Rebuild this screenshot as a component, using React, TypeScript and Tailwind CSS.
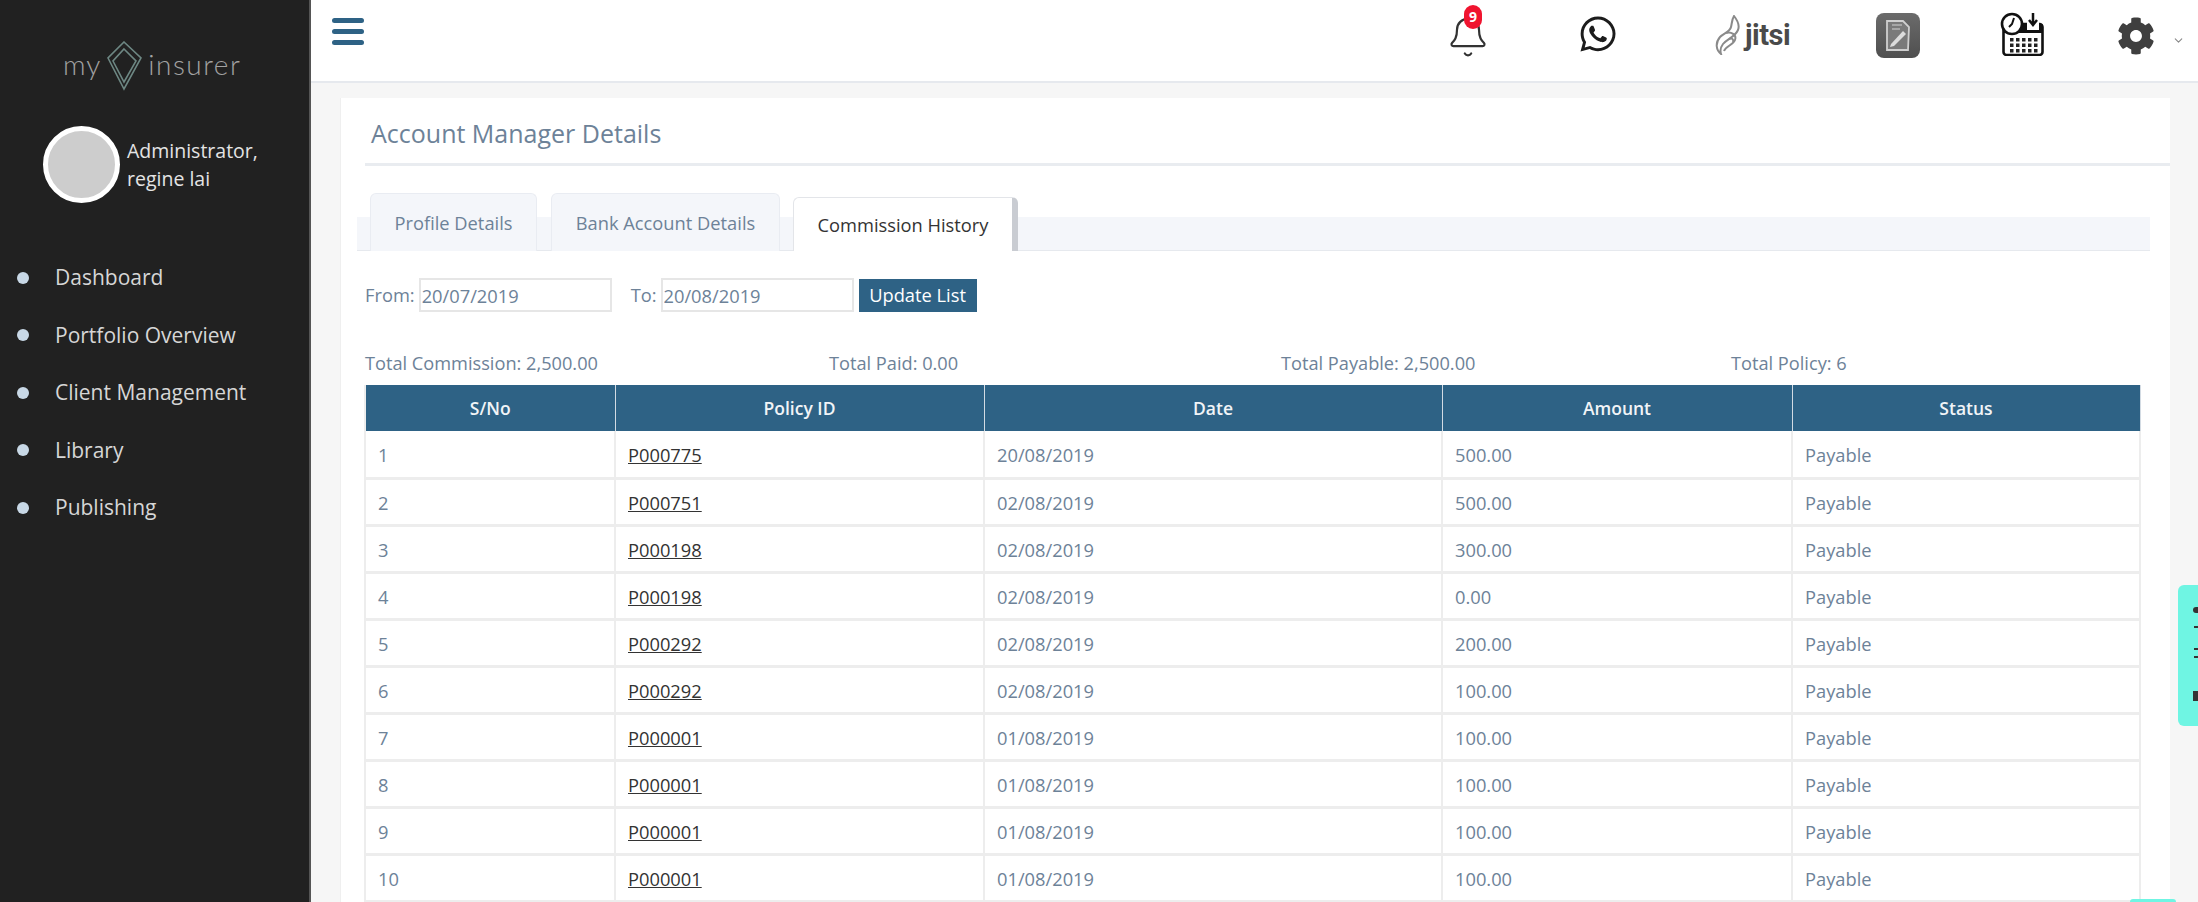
import { Bell, ChevronDown } from "lucide-react";
import { FaCog, FaWhatsapp } from "react-icons/fa";

const menu = ["Dashboard", "Portfolio Overview", "Client Management", "Library", "Publishing"];

const rows = [
  ["1", "P000775", "20/08/2019", "500.00"],
  ["2", "P000751", "02/08/2019", "500.00"],
  ["3", "P000198", "02/08/2019", "300.00"],
  ["4", "P000198", "02/08/2019", "0.00"],
  ["5", "P000292", "02/08/2019", "200.00"],
  ["6", "P000292", "02/08/2019", "100.00"],
  ["7", "P000001", "01/08/2019", "100.00"],
  ["8", "P000001", "01/08/2019", "100.00"],
  ["9", "P000001", "01/08/2019", "100.00"],
  ["10", "P000001", "01/08/2019", "100.00"],
];

function Gem() {
  return (
    <svg className="w-[36px] h-[50px] ml-[6px] mr-[5px] shrink-0" viewBox="0 0 36 50" fill="none" stroke="#6d8783" strokeWidth={1.6}>
      <path d="M17 1 L34 17 L17 48 L1 17 Z" />
      <path d="M17 8 L29 20 L17 41 L6 20 Z" />
    </svg>
  );
}

function NotesIcon() {
  return (
    <svg className="w-[44px] h-[45px]" viewBox="0 0 44 45">
      <defs>
        <linearGradient id="notes-bg" x1="0" y1="0" x2="0" y2="1">
          <stop offset="0" stopColor="#6b6b6b" />
          <stop offset="1" stopColor="#4f4f4f" />
        </linearGradient>
      </defs>
      <rect x="0" y="0" width="44" height="45" rx="8" fill="url(#notes-bg)" />
      <path d="M11 8 H27 L33 14 L32 37 H11 Z" fill="#7a7a7a" stroke="#cfcfcf" strokeWidth={1.8} />
      <path d="M16 12 H26 M16 16 H24" stroke="#b5b5b5" strokeWidth={1.4} />
      <path d="M15 31 L27 18 L30 21 L18 33 L14 34 Z" fill="#dcdcdc" />
    </svg>
  );
}

function CalendarIcon() {
  const dots = [];
  for (let r = 0; r < 3; r++) {
    for (let c = 0; c < 5; c++) {
      dots.push(<rect key={`${r}-${c}`} x={10 + c * 6} y={26 + r * 5.5} width="3.5" height="3.5" fill="#222" />);
    }
  }
  return (
    <svg className="w-[44px] h-[44px]" viewBox="0 0 44 44" fill="none">
      <rect x="3.5" y="12" width="39" height="31" rx="3" stroke="#111" strokeWidth={2.6} fill="#fff" />
      <rect x="3.5" y="12" width="39" height="9" fill="#111" />
      {dots}
      <circle cx="12" cy="12" r="10" fill="#fff" stroke="#111" strokeWidth={2.6} />
      <path d="M14 6 L12 12 L9 15" stroke="#111" strokeWidth={2} />
      <rect x="27" y="4" width="12" height="14" fill="#fff" />
      <path d="M33 1 V12 M29 8 L33 13 L37 8" stroke="#111" strokeWidth={2.5} />
    </svg>
  );
}

function JitsiLogo() {
  return (
    <div className="flex items-center w-[78px] h-[40px]">
      <svg className="w-[30px] h-[40px] shrink-0" viewBox="0 0 30 40" fill="none" stroke="#8a8a8a" strokeWidth={2}>
        <path d="M19 1 C23 6 25 10 23 15 C20 22 12 24 8 29 C5 33 5 36 6 39 C1 35 0 28 5 22 C9 18 15 17 16 12 C17 8 17 4 19 1 Z" />
        <path d="M11 18 C16 16 22 20 20 25 C18 30 11 31 9 36" />
        <path d="M14 24 C17 23 19 24 18 27" />
      </svg>
      <span className="font-['Roboto',sans-serif] font-bold text-[29px] leading-none tracking-[-0.5px] text-[#4a4a4a]">jitsi</span>
    </div>
  );
}

function Sidebar() {
  return (
    <aside className="w-[311px] shrink-0 bg-[#212121] border-r-2 border-[#555] h-full">
      <div className="flex items-center h-[50px] mt-[41px] pl-[63px]">
        <span className="font-['Lato',sans-serif] font-light text-[28px] leading-none tracking-[1px] text-[#a2a2a2] mb-[4px]">my</span>
        <Gem />
        <span className="font-['Lato',sans-serif] font-light text-[28px] leading-none tracking-[1.5px] text-[#a2a2a2] mb-[4px]">insurer</span>
      </div>
      <div className="flex items-center mt-[35px] pl-[43px]">
        <div className="w-[77px] h-[77px] rounded-full bg-[#cdcdcd] border-[5px] border-white shrink-0" />
        <p className="ml-[7px] text-[19.5px] leading-[28px] text-[#e4e4e4]">
          Administrator,
          <br />
          regine lai
        </p>
      </div>
      <ul className="mt-[46px]">
        {menu.map((item) => (
          <li key={item} className="flex items-center h-[57.5px] pl-[17px] text-[21px] text-[#d6d6d6]">
            <span className="w-[12px] h-[12px] rounded-full bg-[#c8d8e6] shrink-0" />
            <span className="ml-[26px]">{item}</span>
          </li>
        ))}
      </ul>
    </aside>
  );
}

function Topbar() {
  return (
    <header className="flex items-center h-[83px] shrink-0 bg-white border-b-2 border-[#e6e9ee]">
      <div className="flex flex-col gap-[6px] w-[32px] ml-[21px] mb-[18px]">
        <span className="h-[5px] rounded-sm bg-[#2e6285]" />
        <span className="h-[5px] rounded-sm bg-[#2e6285]" />
        <span className="h-[5px] rounded-sm bg-[#2e6285]" />
      </div>
      <div className="relative ml-[1082px] mb-[8px]">
        <Bell className="w-[44px] h-[48px] text-[#333]" strokeWidth={1.2} />
        <span className="absolute -top-[8px] left-[18px] flex items-center justify-center w-[18px] h-[24px] rounded-full bg-[#f0142f] text-white text-[14px] font-bold leading-none">
          9
        </span>
      </div>
      <FaWhatsapp className="w-[40px] h-[40px] ml-[88px] mb-[14px] text-[#1c1c1c]" />
      <div className="ml-[97px] mb-[11px]">
        <JitsiLogo />
      </div>
      <div className="ml-[83px] mb-[10px]">
        <NotesIcon />
      </div>
      <div className="ml-[80px] mb-[14px]">
        <CalendarIcon />
      </div>
      <FaCog className="w-[38px] h-[38px] ml-[73px] mb-[10px] text-[#3f3f3f]" />
      <ChevronDown className="w-[13px] h-[13px] ml-[17px] text-[#888]" />
    </header>
  );
}

function Tabs() {
  return (
    <div className="relative mt-[27px] ml-[-8px] mr-[20px] h-[58px]">
      <div className="absolute left-0 right-0 bottom-0 h-[34px] bg-[#f4f6fa] border-b border-[#e6e9ee]" />
      <div className="relative flex items-end h-full pl-[13px] text-[18.3px]">
        <div className="flex items-center justify-center w-[167px] h-[58px] rounded-t-md bg-[#f4f6fa] border border-b-0 border-[#e9ecf2] text-[#6d8298]">
          Profile Details
        </div>
        <div className="flex items-center justify-center w-[229px] h-[58px] ml-[14px] rounded-t-md bg-[#f4f6fa] border border-b-0 border-[#e9ecf2] text-[#6d8298]">
          Bank Account Details
        </div>
        <div className="flex items-center justify-center w-[225px] h-[54px] ml-[13px] rounded-t-md bg-white border border-b-0 border-r-[6px] border-[#e3e5e9] border-r-[#c9ccd2] text-[#333]">
          Commission History
        </div>
      </div>
    </div>
  );
}

function Filters() {
  const input = "h-[34px] w-[193px] px-[1px] border-2 border-[#e6e6e6] bg-white text-[18.3px] text-[#6d8298] outline-none";
  return (
    <div className="flex items-center mt-[27px] text-[18.3px] text-[#6d8298]">
      <span>From:</span>
      <input className={`${input} ml-[4px]`} defaultValue="20/07/2019" readOnly />
      <span className="ml-[19px]">To:</span>
      <input className={`${input} ml-[4px]`} defaultValue="20/08/2019" readOnly />
      <button className="ml-[5px] w-[118px] h-[33px] bg-[#2e6285] text-white text-[18.3px]">Update List</button>
    </div>
  );
}

function CommissionTable() {
  const th = "h-[46px] border-r border-[#d3dbe3] font-semibold text-[17.5px] text-[#f1f4f7] text-center";
  const td = "h-[47px] border-r-2 border-b-[3px] border-[#ededed] pl-[12px] pt-[1px] text-[18.3px] text-[#6d8298]";
  return (
    <table className="w-[1775px] table-fixed border-collapse mt-[8px] ml-[-1px] border-l-2 border-[#ededed]">
      <colgroup>
        <col className="w-[250px]" />
        <col className="w-[369px]" />
        <col className="w-[458px]" />
        <col className="w-[350px]" />
        <col className="w-[348px]" />
      </colgroup>
      <thead className="bg-[#2e6285]">
        <tr>
          <th className={th}>S/No</th>
          <th className={th}>Policy ID</th>
          <th className={th}>Date</th>
          <th className={th}>Amount</th>
          <th className={th}>Status</th>
        </tr>
      </thead>
      <tbody>
        {rows.map(([no, id, date, amount]) => (
          <tr key={no}>
            <td className={td}>{no}</td>
            <td className={td}>
              <a className="text-[#333] underline" href="#">{id}</a>
            </td>
            <td className={td}>{date}</td>
            <td className={td}>{amount}</td>
            <td className={td}>Payable</td>
          </tr>
        ))}
      </tbody>
    </table>
  );
}

export default function App() {
  return (
    <div className="relative flex w-[2198px] h-[902px] overflow-hidden font-['Open_Sans',sans-serif] bg-[#f6f6f6]">
      <Sidebar />
      <main className="flex flex-col flex-1 min-w-0">
        <Topbar />
        <div className="ml-[29px] mr-[28px] mt-[15px] pl-[24px] bg-white flex-1 border-l border-[#efefef]">
          <div className="border-b-[3px] border-[#e9ecf0] h-[68px] flex items-center pl-[6px] pt-[6px] text-[25px] text-[#6d8298]">
            Account Manager Details
          </div>
          <Tabs />
          <Filters />
          <div className="grid grid-cols-[464px_452px_450px_1fr] mt-[38px] text-[18.2px] text-[#6d8298]">
            <span>Total Commission: 2,500.00</span>
            <span>Total Paid: 0.00</span>
            <span>Total Payable: 2,500.00</span>
            <span>Total Policy: 6</span>
          </div>
          <CommissionTable />
        </div>
      </main>
      {/* side tab, its label is cut off by the window edge */}
      <div className="absolute right-0 top-[585px] flex flex-col items-end w-[20px] h-[141px] pt-[22px] rounded-l-md bg-[#6ff5e3] overflow-hidden">
        <span className="w-[5px] h-[6px] rounded-l-sm bg-[#333]" />
        <span className="w-[4px] h-[2px] mt-[13px] bg-[#333]" />
        <span className="w-[4px] h-[2px] mt-[20px] bg-[#333]" />
        <span className="w-[4px] h-[2px] mt-[6px] bg-[#333]" />
        <span className="w-[5px] h-[10px] mt-[33px] bg-[#333]" />
      </div>
      <div className="absolute left-[2130px] top-[899px] w-[46px] h-[3px] rounded-t-md bg-[#6ff5e3]" />
    </div>
  );
}
